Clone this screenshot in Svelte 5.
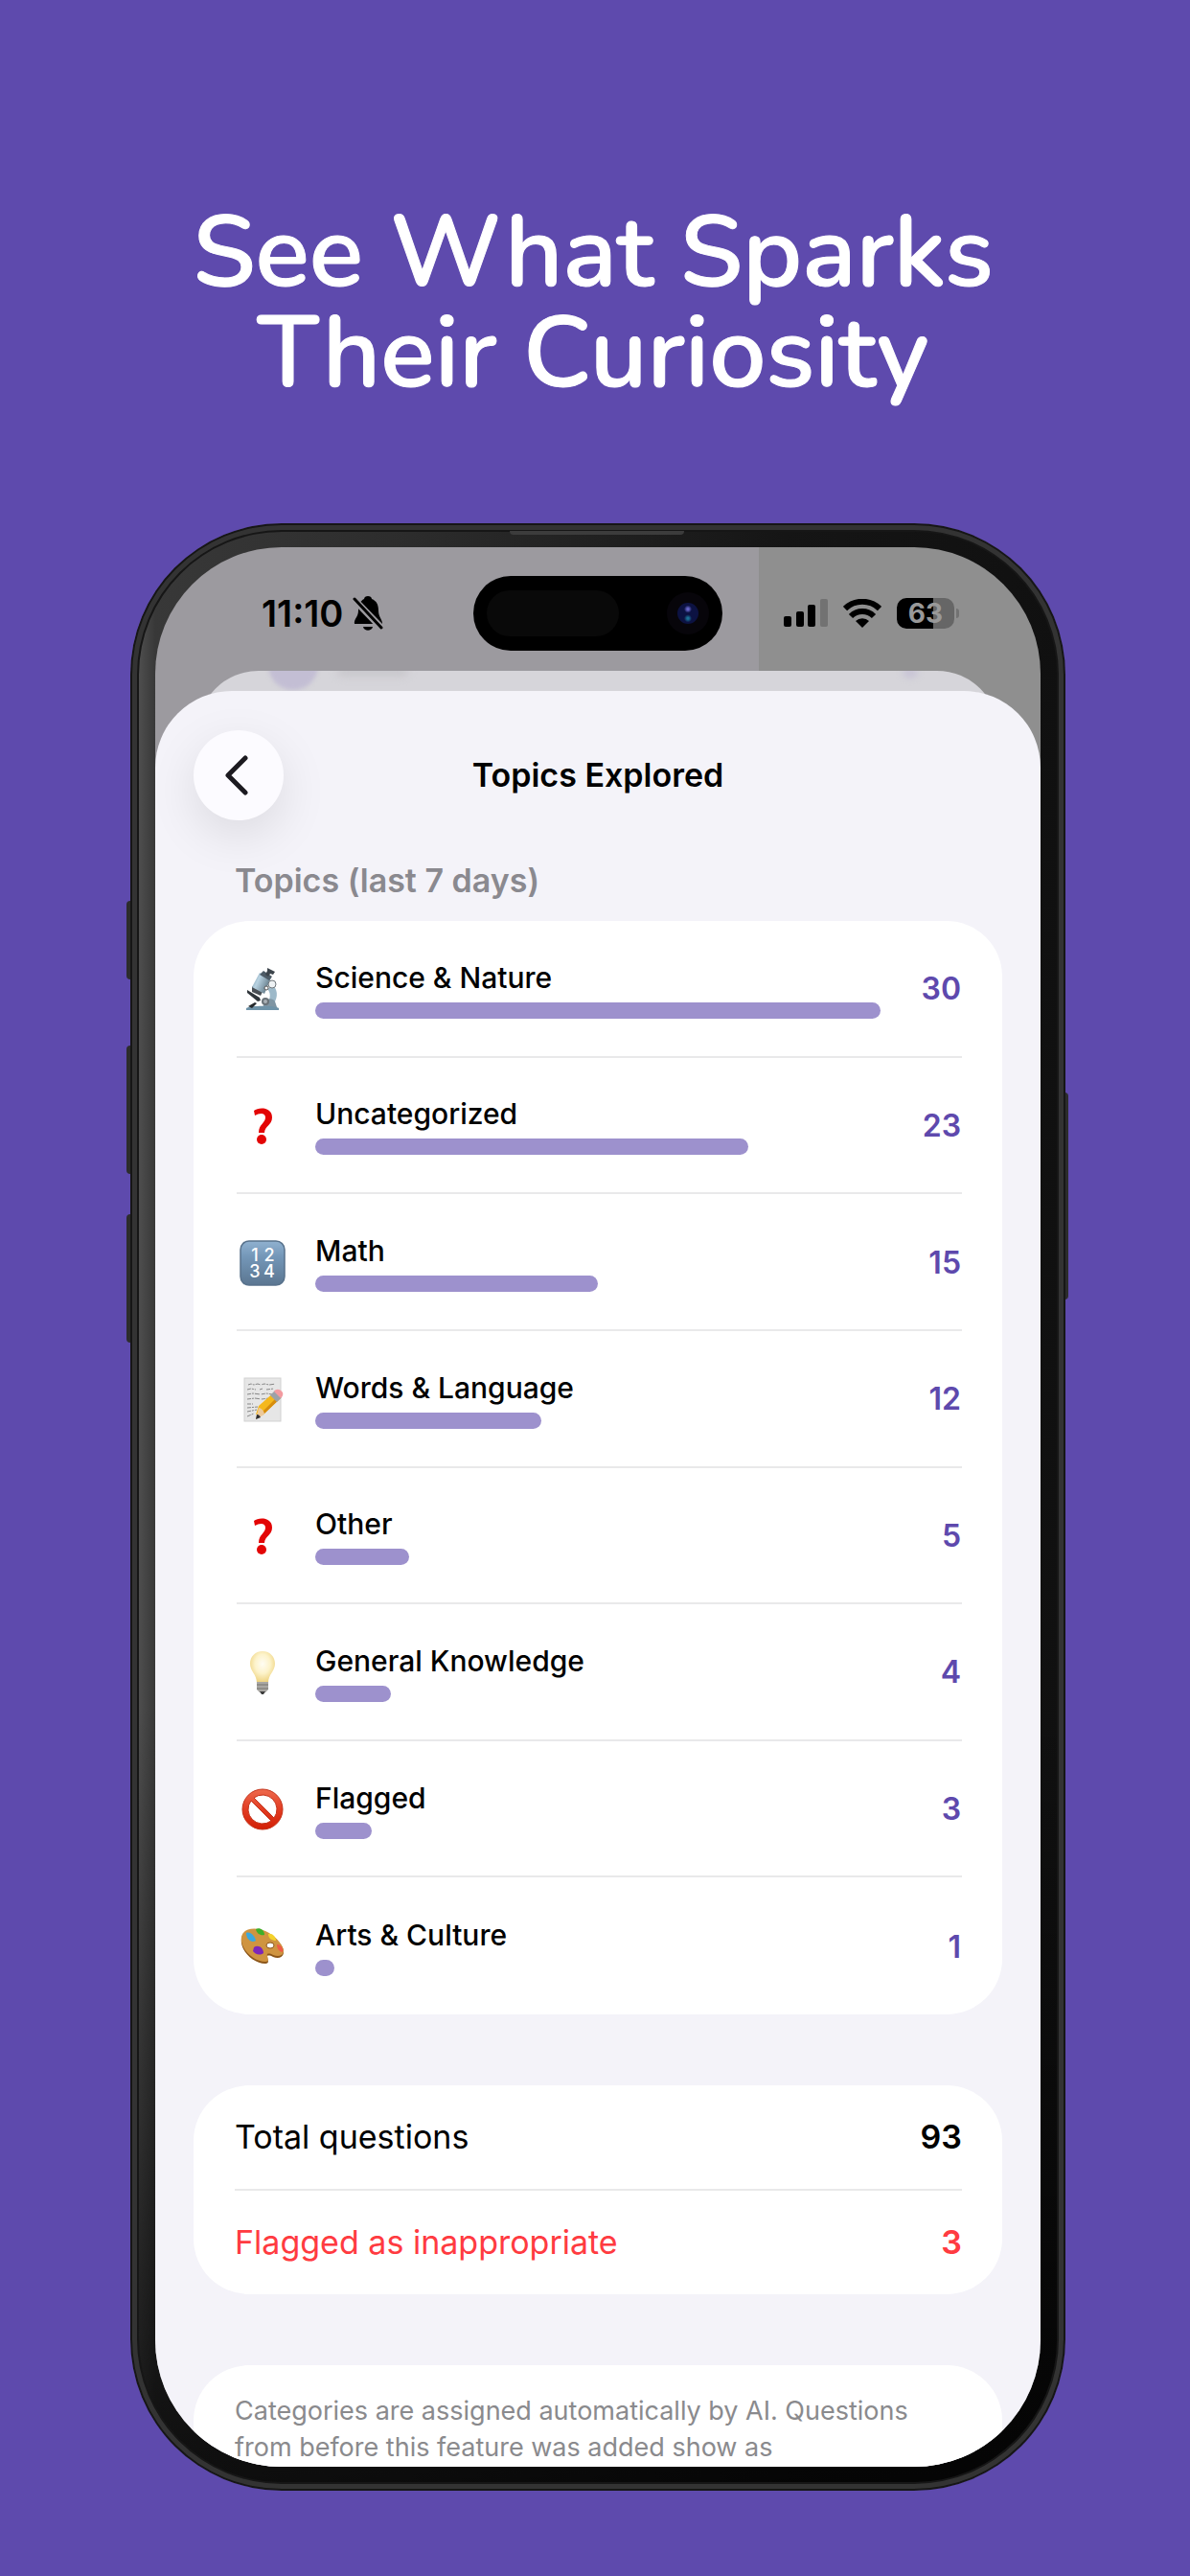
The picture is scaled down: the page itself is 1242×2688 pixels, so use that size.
<script>
  const topics = [
    { name: 'Science & Nature', count: 30, icon: 'microscope' },
    { name: 'Uncategorized', count: 23, icon: 'question' },
    { name: 'Math', count: 15, icon: 'numbers' },
    { name: 'Words & Language', count: 12, icon: 'memo' },
    { name: 'Other', count: 5, icon: 'question' },
    { name: 'General Knowledge', count: 4, icon: 'bulb' },
    { name: 'Flagged', count: 3, icon: 'prohibited' },
    { name: 'Arts & Culture', count: 1, icon: 'palette' },
  ];
  const most = Math.max(...topics.map((t) => t.count));
</script>

{#snippet topicIcon(kind)}
  <svg class="topic-icon" viewBox="0 0 48 48" aria-hidden="true">
    {#if kind === 'microscope'}
      <defs>
        <linearGradient id="tube" x1="0" y1="0" x2="1" y2="0.5">
          <stop offset="0" stop-color="#6d8da1" /><stop offset="0.4" stop-color="#b9d3e2" /><stop offset="1" stop-color="#5f7684" />
        </linearGradient>
      </defs>
      <path d="M35 20c6 6 5 16-2 22h-8c7-4 9-13 4-18z" fill="#9db9c9" />
      <path d="M27 37a6 6 0 0 1 10 0l2 6H24z" fill="#7f95a3" />
      <circle cx="27" cy="37" r="4" fill="#6a7278" /><circle cx="27" cy="37" r="2" fill="#a9b0b5" />
      <path d="M7 44c4-3 30-3 34 0v2H7z" fill="#6f93a8" />
      <path d="M8 25l13 8 1 3-3 1-11-9z" fill="#30363b" />
      <path d="M9 42l7-4 2 1-5 5z" fill="#25292c" />
      <path d="M13 21l11 6-2 4-9-4z" fill="#4a4f55" />
      <path d="M21 7l12 5-7 17-13-7z" fill="url(#tube)" />
      <path d="M25 5l9 6-3 4-10-6z" fill="#4d5b66" />
      <path d="M29 2l8 4-2 3-3-1-2 3-3-2 2-4z" fill="#3c444b" />
      <circle cx="34" cy="19" r="4" fill="#eef2f4" stroke="#70777c" stroke-width="1" />
      <circle cx="28" cy="23" r="2" fill="#fff" stroke="#555" stroke-width="1" />
    {:else if kind === 'question'}
      <path d="M15 8c5-4 19-4 19 7 0 8-8 9-8 16H20c0-9 7-10 7-16 0-5-6-5-11-2z" fill="#e30505" />
      <circle cx="23" cy="38" r="5" fill="#e30505" />
    {:else if kind === 'numbers'}
      <defs>
        <linearGradient id="keycap" x1="0" y1="0" x2="0" y2="1">
          <stop offset="0" stop-color="#90b1d0" /><stop offset="0.35" stop-color="#7497b8" /><stop offset="1" stop-color="#5b7691" />
        </linearGradient>
      </defs>
      <rect x="1" y="1" width="46" height="46" rx="9" fill="url(#keycap)" stroke="#58728c" stroke-width="1.5" />
      <g class="digits"><text x="16" y="22">1</text><text x="31" y="22">2</text><text x="16" y="39">3</text><text x="31" y="39">4</text></g>
    {:else if kind === 'memo'}
      <rect x="5" y="2" width="38" height="45" fill="#e6e6e6" stroke="#d2d2d2" stroke-width="1" />
      <g fill="none" stroke="#888" stroke-width="1" stroke-dasharray="4 1 2 1 5 2">
        <path d="M9 9l3-1 3 1 4-1 3 1 4-1 5 1 7-1" /><path d="M8 14l4-1 5 1m4 0l3-1m4 1l8-1" /><path d="M8 19l6-1 8 1 6-1 6 1" />
        <path d="M8 24l8-1 7 1 8-1" /><path d="M8 29l6 0M8 33l11-1M8 37l10-2M8 42l7-3" />
      </g>
      <path d="M17 40l3-9 17-15 6 6-17 17z" fill="#f5b81c" />
      <path d="M24 37l16-16 3 2-17 16-6 2z" fill="#d78d0c" />
      <path d="M17 45l3-12c3 0 6 4 6 7z" fill="#ecc99a" /><path d="M17 45l1-5c2 0 3 1 4 3z" fill="#2e2e2e" />
      <path d="M32 20l5-5 7 7-5 5z" fill="#9ba2a8" /><path d="M36 16c2-3 6-3 9 1 1 3-1 5-2 6z" fill="#f29ba0" />
    {:else if kind === 'bulb'}
      <defs>
        <radialGradient id="glass" cx="0.5" cy="0.4" r="0.6">
          <stop offset="0" stop-color="#fffdf3" /><stop offset="0.5" stop-color="#fdf3cb" /><stop offset="1" stop-color="#eed27c" />
        </radialGradient>
      </defs>
      <path d="M24 2c8 0 13 6 13 13 0 8-7 11-7 20H18c0-9-7-12-7-20C11 8 16 2 24 2z" fill="url(#glass)" />
      <path d="M18 34h12v8l-3 3h-6l-3-3z" fill="#a9a7a3" />
      <path d="M18 37h12M18 41h12" stroke="#77746f" stroke-width="1" /><path d="M21 44h6l-2 3h-2z" fill="#3c3c3c" />
    {:else if kind === 'prohibited'}
      <defs>
        <linearGradient id="ban" x1="0" y1="0" x2="0" y2="1">
          <stop offset="0" stop-color="#ee6a4d" /><stop offset="0.5" stop-color="#e23c22" /><stop offset="1" stop-color="#d21f05" />
        </linearGradient>
      </defs>
      <path fill-rule="evenodd" d="M24 3a21 21 0 1 1 0 42 21 21 0 0 1 0-42zM15 12l21 21A15 15 0 0 0 15 12zM12 15a15 15 0 0 0 21 21z" fill="url(#ban)" stroke="#c43219" stroke-width="1" />
    {:else}
      <path d="M2 15C4 4 18 4 27 8c11 5 20 16 19 22-1 5-6 6-11 4-4-2-7-2-6 1s2 6-2 6C14 41 0 27 2 15z" fill="#8b5518" />
      <path d="M2 13C4 3 18 3 27 7c11 5 20 16 19 22-1 4-6 5-11 3-4-2-7-2-6 1s2 6-2 6C14 39 0 25 2 13z" fill="#cf9440" />
      <ellipse cx="32" cy="22" rx="4" ry="3" fill="#fff" stroke="#8b5518" stroke-width="1" />
      <path d="M7 9c4-2 9 3 10 8-4 3-10-1-10-8z" fill="#3ba8dd" /><path d="M17 5c4-2 9 1 9 6-4 1-8-1-9-6z" fill="#3daf28" />
      <path d="M30 10c4-1 8 3 8 7-4 0-8-2-8-7z" fill="#f3d12c" /><path d="M39 21c4 0 7 4 6 8-4 0-6-4-6-8z" fill="#ee5b46" />
      <path d="M15 24c4-3 10 0 10 6-4 3-9 1-11-2z" fill="#7d26b8" />
    {/if}
  </svg>
{/snippet}

<main class="poster">
  <h1>See What Sparks<br />Their Curiosity</h1>

  <div class="phone">
    <span class="side-button action"></span>
    <span class="side-button volume-up"></span>
    <span class="side-button volume-down"></span>
    <span class="side-button power"></span>
    <span class="speaker"></span>

    <div class="screen">
      <header class="status">
        <div class="clock">
          <span>11:10</span>
          <svg width="32" height="38" viewBox="0 0 32 38" role="img" aria-label="Silent mode">
            <path d="M16 1c2 0 4 1 4 3 5 2 7 6 7 12 0 7 4 9 4 14H2c-1-5 4-7 4-14 0-6 2-10 6-12 0-2 2-3 4-3zM11 33h10c-1 5-9 5-10 0z" />
            <path class="gap" d="M0 3l31 32" />
            <path class="slash" d="M2 4l28 30" />
          </svg>
        </div>
        <div class="island"><span class="sensor"></span><span class="camera"></span></div>
        <div class="indicators">
          <svg width="46" height="30" viewBox="0 0 46 30" role="img" aria-label="Signal">
            <rect x="0" y="18" width="8" height="11" rx="2" /><rect x="13" y="13" width="8" height="16" rx="2" />
            <rect x="25" y="6" width="8" height="23" rx="2" /><rect class="off" x="38" y="0" width="8" height="29" rx="2" />
          </svg>
          <svg width="40" height="30" viewBox="0 0 40 30" role="img" aria-label="Wi-Fi">
            <g fill="none" stroke="#000" stroke-width="6"><path d="M2 10a26 26 0 0 1 36 0" /><path d="M8 18a17 17 0 0 1 24 0" /></g>
            <path d="M20 30l-7-7a10 10 0 0 1 14 0z" />
          </svg>
          <div class="battery"><span>63</span></div>
        </div>
      </header>

      <div class="back-sheet"><span class="avatar"></span><span class="ghost"></span><span class="ghost-dot"></span></div>

      <section class="sheet">
        <div class="nav">
          <button type="button" aria-label="Back">
            <svg width="26" height="42" viewBox="0 0 26 42" aria-hidden="true"><path d="M22 3L4 21l18 18" /></svg>
          </button>
          <h2>Topics Explored</h2>
        </div>

        <h3>Topics (last 7 days)</h3>
        <ul class="card topics">
          {#each topics as topic}
            <li>
              {@render topicIcon(topic.icon)}
              <div class="measure">
                <span>{topic.name}</span>
                <div class="bar" style="width: {(topic.count / most) * 100}%"></div>
              </div>
              <strong>{topic.count}</strong>
            </li>
          {/each}
        </ul>

        <dl class="card totals">
          <div><dt>Total questions</dt><dd>93</dd></div>
          <div class="alert"><dt>Flagged as inappropriate</dt><dd>3</dd></div>
        </dl>

        <p class="card note">Categories are assigned automatically by AI. Questions from before this feature was added show as</p>
      </section>
    </div>
  </div>
</main>

<style>
  :global(body) { margin: 0; background: #5e4aad; }
  .poster {
    box-sizing: border-box;
    min-height: 2688px;
    padding: 211px 0 89px;
    font-family: Inter, "Liberation Sans", sans-serif;
    color: #000;
  }
  h1 {
    margin: 0 4px 125px 0;
    color: #fff;
    font: 600 105px/105px Nunito, "Open Sans", "Noto Sans", sans-serif;
    text-align: center;
    -webkit-text-stroke: 1px #fff;
  }
  .phone {
    position: relative;
    box-sizing: border-box;
    margin: 0 130px 0 136px;
    padding: 25px 26px;
    border-radius: 158px;
    background:
      linear-gradient(180deg, transparent 60%, rgb(0 0 0 / 75%) 100%),
      linear-gradient(90deg, #4e4e4e 9px, #383838 26px, #2c2c2c 30%, #151515 70%, #101010 100%);
    box-shadow: inset 0 0 0 2px #161616, inset 0 0 0 7px #333, inset 0 0 0 9px #161616;
  }
  .side-button { position: absolute; z-index: -1; left: -4px; width: 8px; border-radius: 4px; background: #2c2c2c; }
  .action { top: 394px; height: 82px; }
  .volume-up { top: 545px; height: 134px; }
  .volume-down { top: 721px; height: 134px; }
  .power { top: 594px; right: -3px; left: auto; height: 216px; }
  .speaker { position: absolute; top: 8px; left: 396px; width: 182px; height: 4px; border-radius: 0 0 4px 4px; background: #3c3c3c; }
  .screen {
    position: relative;
    display: flex;
    flex-direction: column;
    overflow: hidden;
    height: 2003px;
    border-radius: 132px;
    background: linear-gradient(90deg, #9c9a9f 630px, #8f8f8f 630px);
  }
  .status {
    display: grid;
    flex: none;
    grid-template-columns: 1fr 260px 1fr;
    align-items: center;
    height: 78px;
    padding: 30px 0 21px;
  }
  .clock { display: flex; align-items: center; gap: 10px; padding-left: 111px; font-size: 38px; line-height: 44px; font-weight: 600; }
  .gap { stroke: #9c9a9f; stroke-width: 7; }
  .slash { stroke: #000; stroke-width: 3; stroke-linecap: round; }
  .island { display: flex; align-items: center; justify-content: space-between; box-sizing: border-box; height: 78px; padding: 0 14px; border-radius: 39px; background: #000; }
  .sensor { width: 138px; height: 48px; border-radius: 24px; background: #090909; }
  .camera { width: 22px; height: 22px; margin-right: 11px; border-radius: 50%; background: radial-gradient(circle at 50% 30%, #6665c8 0 1px, transparent 4px), radial-gradient(circle at 50% 74%, #1a6f94 0 1px, transparent 4px), #0c1242; box-shadow: 0 0 0 11px #07050a; }
  .indicators { display: flex; align-items: center; gap: 16px; padding-left: 64px; }
  .indicators svg, .battery { flex: none; }
  .off { fill: #727272; }
  .battery {
    position: relative;
    width: 60px;
    border-radius: 10px;
    background: linear-gradient(90deg, #000 38px, #666 38px);
    color: #999;
    font-size: 28px;
    line-height: 32px;
    font-weight: 700;
    text-align: center;
  }
  .battery::after { content: ""; position: absolute; top: 11px; right: -5px; width: 3px; height: 10px; border-radius: 0 3px 3px 0; background: #727272; }
  .back-sheet { position: relative; flex: none; overflow: hidden; height: 21px; margin: 0 44px; padding-bottom: 80px; border-radius: 64px 64px 0 0; background: #d6d5da; }
  .avatar { position: absolute; top: -32px; left: 74px; width: 52px; height: 52px; border-radius: 50%; background: #c3bed4; filter: blur(2px); }
  .ghost { position: absolute; top: -6px; left: 146px; width: 74px; height: 12px; border-radius: 6px; background: #c8c7cc; filter: blur(4px); }
  .ghost-dot { position: absolute; top: -4px; right: 84px; width: 16px; height: 12px; border-radius: 50%; background: #c9c5d6; filter: blur(3px); }
  .sheet { position: relative; flex: 1; box-sizing: border-box; margin-top: -80px; padding: 41px 40px 0; border-radius: 80px 80px 0 0; background: #f4f3f9; }
  .nav { display: grid; grid-template-columns: 94px 1fr 94px; align-items: center; }
  button { display: grid; place-items: center; height: 94px; padding: 0 4px 0 0; border: 0; border-radius: 50%; background: #fcfbff; box-shadow: 0 16px 50px rgb(0 0 0 / 10%); }
  button path { fill: none; stroke: #1c1a20; stroke-width: 5; stroke-linecap: round; stroke-linejoin: round; }
  h2 { margin: 0; font-size: 34px; line-height: 44px; font-weight: 600; text-align: center; }
  h3 { margin: 41px 0 20px; padding-left: 43px; color: #8a898f; font-size: 34px; line-height: 44px; font-weight: 600; }
  .card { box-sizing: border-box; margin: 0 0 74px; padding: 0 42px 0 45px; border-radius: 58px; background: #fff; list-style: none; }
  .topics { display: grid; grid-auto-rows: 1fr; min-height: 1141px; }
  li { display: grid; grid-template-columns: 48px 590px 1fr; align-items: center; column-gap: 34px; padding-top: 2px; border-bottom: 2px solid #e9e9ea; }
  li:last-child, .totals div:last-child { border-bottom: 0; }
  .topic-icon { width: 48px; height: 48px; margin-left: 3px; }
  .digits { fill: #fff; font: 500 18px Inter, sans-serif; text-anchor: middle; }
  .measure { display: grid; gap: 8px; font-size: 30px; line-height: 36px; font-weight: 500; }
  .bar { height: 17px; border-radius: 9px; background: #9d91cd; }
  strong { padding-right: 1px; color: #5e49ad; font-size: 32px; line-height: 40px; font-weight: 600; text-align: right; }
  .totals { padding-left: 43px; }
  .totals > div { display: flex; align-items: center; justify-content: space-between; height: 108px; border-bottom: 2px solid #e9e9ea; font-size: 34px; line-height: 44px; }
  dd { margin: 0; font-weight: 600; }
  .alert { color: #ff3b41; }
  .note { padding: 29px 80px 60px 43px; color: #8a8a8d; font-size: 27px; line-height: 38px; }
</style>
